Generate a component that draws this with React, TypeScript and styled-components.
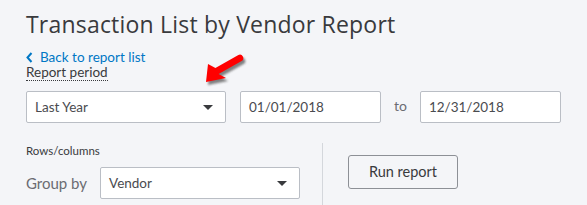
import React from "react";
import styled, { createGlobalStyle } from "styled-components";

const GlobalStyle = createGlobalStyle`
  html, body {
    margin: 0;
    padding: 0;
    background: #f4f5f8;
  }
  body {
    font-family: Lato, "Open Sans", "Liberation Sans", sans-serif;
    color: #393a3d;
  }
`;

const Page = styled.div`
  position: relative;
  display: flex;
  flex-direction: column;
  align-items: flex-start;
  width: 587px;
  height: 205px;
  padding: 8px 0 0 26px;
  box-sizing: border-box;
  overflow: hidden;
`;

const Title = styled.h1`
  margin: 0;
  font-family: "Open Sans", Lato, sans-serif;
  font-size: 23px;
  font-weight: 400;
  line-height: 32px;
  color: #393a3d;
  letter-spacing: 0.2px;
`;

const BackLink = styled.a`
  display: flex;
  align-items: center;
  gap: 7px;
  margin-top: 9px;
  font-size: 13.5px;
  line-height: 16px;
  color: #0077c5;
  text-decoration: none;
`;

const PeriodLabel = styled.span`
  display: block;
  font-size: 13.5px;
  line-height: 14px;
  color: #393a3d;
  border-bottom: 1px dotted #393a3d;
  padding-bottom: 1px;
`;

const Row = styled.div`
  display: flex;
  align-items: center;
  margin-top: 10px;
`;

const Field = styled.div<{ width: number; gapLeft?: number }>`
  width: ${({ width }) => width}px;
  height: 32px;
  margin-left: ${({ gapLeft = 0 }) => gapLeft}px;
  box-sizing: border-box;
  background: #fff;
  border: 1px solid #babec5;
  border-radius: 2px;
  display: flex;
  align-items: center;
  padding: 0 8px;
  font-size: 13.5px;
  color: #4a4b4f;
`;

const Caret = styled.span`
  margin-left: auto;
  margin-right: 4px;
  width: 0;
  height: 0;
  border-left: 5px solid transparent;
  border-right: 5px solid transparent;
  border-top: 5px solid #393a3d;
`;

const ToLabel = styled.span`
  margin: 0 13px 0 13px;
  font-size: 14px;
  color: #6b6c72;
  padding-bottom: 4px;
`;

const Bottom = styled.div`
  display: flex;
  margin-top: 20px;
`;

const RowsCol = styled.div`
  display: flex;
  flex-direction: column;
  width: 296px;
`;

const SmallLabel = styled.div`
  font-size: 11.5px;
  line-height: 14px;
  color: #393a3d;
  margin-top: 1px;
`;

const GroupRow = styled.div`
  display: flex;
  align-items: center;
  margin-top: 9px;
`;

const GroupLabel = styled.span`
  width: 74px;
  font-size: 15px;
  color: #6b6c72;
`;

const Divider = styled.div`
  width: 1px;
  height: 63px;
  background: #d4d7dc;
`;

const RunButton = styled.button`
  margin: 12px 0 0 25px;
  width: 110px;
  height: 34px;
  background: #f4f5f8;
  border: 1px solid #8d9096;
  border-radius: 3px;
  font-family: Lato, "Open Sans", sans-serif;
  font-size: 14.5px;
  color: #393a3d;
  padding: 0 0 2px;
`;

const Arrow = styled.svg`
  position: absolute;
  left: 200px;
  top: 48px;
`;

const arrowPath =
  "M6 34 L8 16 L15.4 19.9 L38.4 6.9 A3.5 3.5 0 0 1 41.6 13.1 L18.6 26.1 L26 30 Z";

export default function App() {
  return (
    <>
      <GlobalStyle />
      <Page>
        <Title>Transaction List by Vendor Report</Title>
        <BackLink href="#">
          <svg width="7" height="11" viewBox="0 0 7 11">
            <path d="M5.5 1 L1.5 5.5 L5.5 10" fill="none" stroke="#0077c5" strokeWidth="2" />
          </svg>
          Back to report list
        </BackLink>
        <PeriodLabel>Report period</PeriodLabel>
        <Row>
          <Field width={200}>
            Last Year
            <Caret />
          </Field>
          <Field width={141} gapLeft={14}>01/01/2018</Field>
          <ToLabel>to</ToLabel>
          <Field width={141}>12/31/2018</Field>
        </Row>
        <Bottom>
          <RowsCol>
            <SmallLabel>Rows/columns</SmallLabel>
            <GroupRow>
              <GroupLabel>Group by</GroupLabel>
              <Field width={200}>
                Vendor
                <Caret />
              </Field>
            </GroupRow>
          </RowsCol>
          <Divider />
          <RunButton>Run report</RunButton>
        </Bottom>
        <Arrow width="52" height="44" viewBox="0 0 52 44">
          <defs>
            <filter id="sh" x="-20%" y="-20%" width="140%" height="140%">
              <feGaussianBlur stdDeviation="1" />
            </filter>
          </defs>
          <path d={arrowPath} fill="#333" opacity="0.6" transform="translate(2 3)" filter="url(#sh)" />
          <path d={arrowPath} fill="#f00" />
        </Arrow>
      </Page>
    </>
  );
}
